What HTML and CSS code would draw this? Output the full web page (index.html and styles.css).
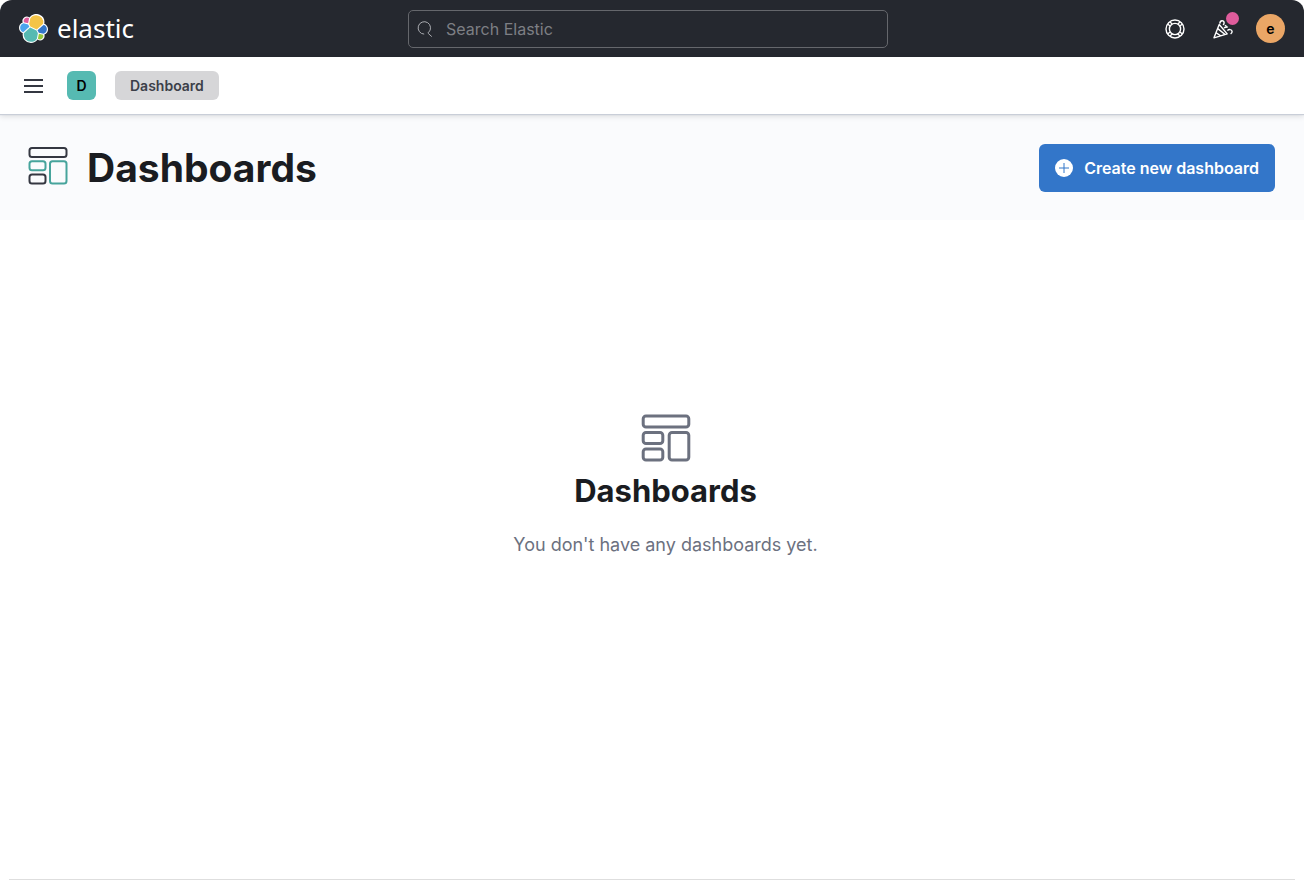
FILE: index.html
```html
<!DOCTYPE html>
<html lang="en">
<head>
<meta charset="utf-8">
<meta name="viewport" content="width=device-width, initial-scale=1">
<title>Dashboards - Elastic</title>
<link rel="stylesheet" href="styles.css">
</head>
<body>
<div class="window">
  <header class="topbar">
    <a class="brand" href="#">
      <svg class="brand-mark" viewBox="0 0 32 32" aria-hidden="true">
        <path class="mark-edge" d="M32 16.77a6.33 6.33 0 0 0-1.14-3.64 6.27 6.27 0 0 0-3.03-2.3 9.04 9.04 0 0 0-5-9.95A9.02 9.02 0 0 0 11.47 3.8a4.78 4.78 0 0 0-5.83.04 4.8 4.8 0 0 0-1.57 5.44 6.36 6.36 0 0 0-2.98 2.3A6.32 6.32 0 0 0 0 15.2a6.33 6.33 0 0 0 4.2 5.95 9.07 9.07 0 0 0 8.9 10.8 9.03 9.03 0 0 0 7.4-3.85 4.76 4.76 0 0 0 5.83 0 4.8 4.8 0 0 0 1.6-5.4A6.37 6.37 0 0 0 32 16.77"/>
        <path class="mark-yellow" d="m12.58 13.79 7 3.2 7.07-6.2A7.85 7.85 0 0 0 18.9 1.4a7.9 7.9 0 0 0-6.48 3.44l-1.18 6.08z"/>
        <path class="mark-teal" d="M5.33 21.21a7.94 7.94 0 0 0 7.8 9.5 7.95 7.95 0 0 0 6.57-3.5l1.16-6.08-1.56-2.98-7.02-3.2z"/>
        <path class="mark-pink" d="m5.29 9.09 4.8 1.13L11.14 4.8a3.8 3.8 0 0 0-5.85 4.29"/>
        <path class="mark-sky" d="M4.87 10.23a5.37 5.37 0 0 0-3.6 5.03 5.3 5.3 0 0 0 3.4 4.94l6.73-6.08-1.23-2.64z"/>
        <path class="mark-green" d="M20.87 27.2a3.78 3.78 0 0 0 5.83-4.3l-4.8-1.12z"/>
        <path class="mark-blue" d="m21.85 20.56 5.28 1.23a5.36 5.36 0 0 0 3.6-5.03 5.3 5.3 0 0 0-3.4-4.93l-6.9 6.05z"/>
      </svg>
      <span class="brand-name">elastic</span>
    </a>
    <label class="search">
      <svg class="icon-search" viewBox="0 0 16 16" aria-hidden="true"><path d="M7.2 13.1A6.2 6.2 0 1 1 11.6 11.4M11.2 11.2l.2 1.4 3.4 3"/></svg>
      <input class="search-input" type="search" placeholder="Search Elastic" aria-label="Search Elastic">
    </label>
    <nav class="tools" aria-label="User tools">
      <button class="tool" type="button" aria-label="Help">
        <svg class="icon-tool" viewBox="0 0 20 20" aria-hidden="true">
          <circle cx="10" cy="10" r="9"/><circle cx="10" cy="10" r="5.6"/>
          <path d="M5.2 2.9 7.2 5.4M2.9 5.2 5.4 7.2M14.8 2.9 12.8 5.4M17.1 5.2 14.6 7.2M5.2 17.1 7.2 14.6M2.9 14.8 5.4 12.8M14.8 17.1 12.8 14.6M17.1 14.8 14.6 12.8"/>
        </svg>
      </button>
      <button class="tool" type="button" aria-label="What's new">
        <svg class="icon-tool icon-news" viewBox="0 0 20 20" aria-hidden="true">
          <path d="M6.2 5.5 1 18.8l13.2-3.9zM4.8 9.6l7 5.7M3.2 13.7l4.4 3.2M6.8 4.6c.3-3.6 4-3.7 4.3-1.1.1 1.2-.5 1.7-.8 2.6M11.2 9.3c.8-2 2.3-.2 3.6-1.7M14.4 11.7c1.2-1.6 4.4-1.6 4.7.7.1 1.2-.6 2-1.5 2.6M12 6.2l1.6 1.3"/>
        </svg>
        <span class="news-dot"></span>
      </button>
      <button class="avatar" type="button" aria-label="Account e">e</button>
    </nav>
  </header>

  <div class="subbar">
    <button class="menu" type="button" aria-label="Toggle navigation">
      <svg class="icon-menu" viewBox="0 0 19 16" aria-hidden="true"><path d="M0 2h19M0 8h19M0 14h19"/></svg>
    </button>
    <button class="space" type="button" aria-label="Space D">D</button>
    <a class="crumb" href="#">Dashboard</a>
  </div>

  <main class="page">
    <div class="page-header">
      <svg class="icon-app" viewBox="0 0 40 38" aria-hidden="true">
        <rect class="stroke-dark" x="1.5" y="1" width="37" height="9" rx="2.5"/>
        <rect class="stroke-teal" x="1.5" y="14.2" width="16" height="9" rx="2.5"/>
        <rect class="stroke-dark" x="1.5" y="27.4" width="16" height="9" rx="2.5"/>
        <rect class="stroke-teal" x="22" y="14.2" width="16.5" height="22.2" rx="2.5"/>
      </svg>
      <h1 class="page-title">Dashboards</h1>
      <button class="create" type="button">
        <svg class="icon-plus" viewBox="0 0 18 18" aria-hidden="true"><circle cx="9" cy="9" r="9"/><path d="M9 4v10M4 9h10"/></svg>
        <span>Create new dashboard</span>
      </button>
    </div>

    <section class="empty">
      <svg class="icon-empty" viewBox="0 0 50 48" aria-hidden="true">
        <rect x="2.2" y="2" width="45.6" height="11" rx="2.8"/>
        <rect x="2.2" y="18.5" width="19.6" height="11" rx="2.8"/>
        <rect x="2.2" y="35" width="19.6" height="11" rx="2.8"/>
        <rect x="28.2" y="18.5" width="19.6" height="27.5" rx="2.8"/>
      </svg>
      <h2 class="empty-title">Dashboards</h2>
      <p class="empty-text">You don't have any dashboards yet.</p>
    </section>
  </main>
  <div class="window-edge"></div>
</div>
</body>
</html>
```
FILE: styles.css
```css
* {
  box-sizing: border-box;
}

body {
  margin: 0;
  background: #fff;
  color: #1a1c21;
  font-family: Inter, "Liberation Sans", sans-serif;
}

button {
  border: 0;
  padding: 0;
  background: none;
  font: inherit;
  cursor: pointer;
}

a {
  color: inherit;
  text-decoration: none;
}

svg {
  display: block;
  flex: none;
}

.window {
  display: flex;
  flex-direction: column;
  min-height: 100vh;
  border-radius: 12px 12px 0 0;
  overflow: hidden;
}

.window-edge {
  height: 1px;
  margin: 0 9px;
  background: #dedede;
}

.topbar {
  display: grid;
  grid-template-columns: 1fr minmax(0, 480px) 1.02fr;
  align-items: center;
  height: 57px;
  padding: 0 19px;
  background: #25282f;
  color: #fff;
}

.brand {
  display: flex;
  align-items: center;
  gap: 9px;
}

.brand-mark {
  width: 29px;
  height: 29px;
}

.mark-edge { fill: #fff; }
.mark-yellow { fill: #f4c447; }
.mark-teal { fill: #56bab2; }
.mark-pink { fill: #df5c9c; }
.mark-sky { fill: #4ba5ee; }
.mark-green { fill: #97c93f; }
.mark-blue { fill: #3376c9; }

.brand-name {
  font-family: "Noto Sans", "Open Sans", sans-serif;
  font-size: 26px;
  font-weight: 400;
  line-height: 30px;
  padding-bottom: 2px;
}

.search {
  display: flex;
  align-items: center;
  gap: 13px;
  height: 38px;
  padding: 0 8px;
  border: 1px solid #65676c;
  border-radius: 5px;
}

.icon-search {
  width: 16px;
  height: 16px;
  fill: none;
  stroke: #a9abb0;
  stroke-width: 1;
}

.search-input {
  flex: 1;
  min-width: 0;
  border: 0;
  padding: 0;
  outline: 0;
  background: none;
  color: #fff;
  font: 400 16px/24px Inter, "Liberation Sans", sans-serif;
}

.search-input::placeholder {
  color: #7d7f84;
  opacity: 1;
}

.tools {
  display: flex;
  align-items: center;
  justify-content: flex-end;
  gap: 9px;
}

.tool {
  position: relative;
  display: grid;
  place-items: center;
  width: 39px;
  height: 39px;
}

.icon-tool {
  width: 20px;
  height: 20px;
  fill: none;
  stroke: #fff;
  stroke-width: 1.4;
  stroke-linejoin: round;
}

.news-dot {
  position: absolute;
  top: 3px;
  right: 3px;
  width: 13px;
  height: 13px;
  border-radius: 50%;
  background: #df5c9c;
}

.avatar {
  width: 29px;
  height: 29px;
  margin-left: 5px;
  border-radius: 50%;
  background: #eaa666;
  color: #000;
  font-size: 14px;
  font-weight: 600;
}

.subbar {
  position: relative;
  display: flex;
  align-items: center;
  height: 57px;
  padding: 0 24px;
  background: #fff;
  box-shadow: 0 1px 1px #c9ced8, 0 2px 6px rgba(0, 0, 0, 0.14);
}

.icon-menu {
  width: 19px;
  height: 16px;
  fill: none;
  stroke: #343741;
  stroke-width: 2;
}

.space {
  width: 29px;
  height: 29px;
  margin: 0 19px 0 24px;
  border-radius: 6px;
  background: #56bab2;
  color: #000;
  font-size: 14px;
  font-weight: 600;
}

.crumb {
  padding: 0 15px;
  border-radius: 6px;
  background: #d6d6d8;
  color: #3c3f49;
  font-size: 14px;
  font-weight: 600;
  line-height: 29px;
}

.page {
  display: flex;
  flex: 1;
  flex-direction: column;
}

.page-header {
  display: flex;
  align-items: center;
  gap: 19px;
  padding: 30px 29px 28px 28px;
  background: #fafbfd;
}

.icon-app {
  width: 40px;
  height: 38px;
  margin-bottom: 4px;
  fill: none;
  stroke-width: 2;
}

.stroke-dark { stroke: #343741; }
.stroke-teal { stroke: #46a49c; }

.page-title {
  margin: 0;
  font-size: 39px;
  font-weight: 700;
  line-height: 48px;
}

.create {
  display: flex;
  align-items: center;
  gap: 11px;
  height: 48px;
  margin-left: auto;
  padding: 0 16px;
  border-radius: 6px;
  background: #3376c9;
  color: #fff;
  font-size: 16px;
  font-weight: 600;
}

.icon-plus {
  width: 18px;
  height: 18px;
  fill: #fff;
  stroke: #3376c9;
  stroke-width: 1;
}

.icon-plus circle {
  stroke: none;
}

.empty {
  display: flex;
  flex: 1;
  flex-direction: column;
  align-items: center;
  justify-content: center;
  padding: 0 0 126px 27px;
  text-align: center;
}

.icon-empty {
  width: 50px;
  height: 48px;
  fill: none;
  stroke: #6c717f;
  stroke-width: 3;
}

.empty-title {
  margin: 9px 0 20px;
  font-size: 31px;
  font-weight: 700;
  line-height: 40px;
}

.empty-text {
  margin: 0;
  color: #6c717f;
  font-size: 18px;
  line-height: 28px;
}
```
